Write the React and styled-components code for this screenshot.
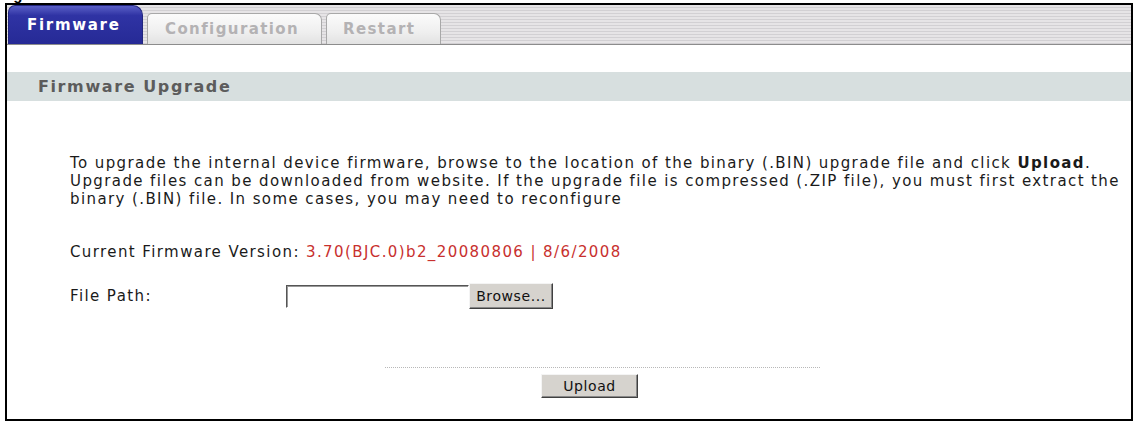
import React from 'react';
import styled, { createGlobalStyle } from 'styled-components';

const GlobalStyle = createGlobalStyle`
  body {
    margin: 0;
    background: #fff;
    font-family: "DejaVu Sans", Verdana, sans-serif;
  }
`;

const Caption = styled.div`
  height: 3px;
  overflow: hidden;
  font: bold 15px/15px "Liberation Sans", Arial, sans-serif;
  color: #000;

  span {
    display: block;
    margin-top: -13px;
  }
`;

const Frame = styled.div`
  margin-left: 5px;
  width: 1124px;
  height: 414px;
  border: 2px solid #000;
  display: flex;
  flex-direction: column;
`;

const TabBar = styled.div`
  display: flex;
  align-items: flex-end;
  height: 39px;
  padding-left: 1px;
  border-bottom: 1px solid #8c8c8c;
  background: repeating-linear-gradient(
    to bottom,
    #e6e4e6 0px,
    #e6e4e6 2px,
    #d2d0d3 2px,
    #d2d0d3 3px
  );
`;

const Tab = styled.div`
  box-sizing: border-box;
  width: ${p => p.$w}px;
  margin-right: 4px;
  height: ${p => (p.$active ? 39 : 31)}px;
  padding-left: ${p => p.$pad}px;
  display: flex;
  align-items: center;
  font-weight: bold;
  font-size: 15px;
  letter-spacing: ${p => (p.$active ? 1.7 : 1.4)}px;
  border-radius: ${p => (p.$active ? '7px 10px 0 0' : '5px 7px 0 0')};
  color: ${p => (p.$active ? '#fff' : '#b4b2b4')};
  background: ${p =>
    p.$active
      ? 'linear-gradient(to bottom, #5a5fc6 0%, #2f33a4 25%, #262a96 100%)'
      : 'linear-gradient(to bottom, #fbfbfb 0%, #efefef 60%, #e2e2e2 100%)'};
  border: 1px solid ${p => (p.$active ? '#22267e' : '#a8a8a8')};
  border-bottom: none;
`;

const TitleBar = styled.div`
  margin-top: 27px;
  height: 29px;
  background: #d7dfdf;
  display: flex;
  align-items: center;
  padding-left: 31px;
  font-weight: bold;
  font-size: 16px;
  letter-spacing: 1.6px;
  color: #5c5c5c;
`;

const Body = styled.div`
  padding: 53px 0 0 63px;
  font-size: 15px;
  letter-spacing: 1.4px;
  line-height: 18px;
  color: #1a1a1a;
`;

const Para = styled.p`
  margin: 0 0 ${p => p.$gap || 0}px;
  white-space: nowrap;
`;

const Red = styled.span`
  color: #c8302e;
`;

const FormRow = styled.div`
  display: flex;
  align-items: center;
  height: 26px;
`;

const Label = styled.div`
  width: 216px;
`;

const TextInput = styled.input`
  box-sizing: border-box;
  width: 183px;
  height: 23px;
  border: 1px solid #fff;
  border-top-color: #555;
  border-left-color: #555;
  box-shadow: inset 1px 1px 0 #999;
  outline: none;
  background: #fff;
`;

const Button = styled.button`
  box-sizing: border-box;
  height: ${p => p.$h}px;
  width: ${p => p.$w}px;
  padding: 0;
  font-family: "DejaVu Sans", Verdana, sans-serif;
  font-size: 14px;
  letter-spacing: 0.6px;
  color: #111;
  background: #d6d3ce;
  border: 1px solid;
  border-color: #f4f4f4 #404040 #404040 #f4f4f4;
  box-shadow: inset -1px -1px 0 #888;
`;

const Footer = styled.div`
  margin-top: auto;
  margin-bottom: 21px;
  display: flex;
  flex-direction: column;
`;

const Dots = styled.div`
  margin-left: 378px;
  width: 435px;
  border-top: 1px dotted #b8b8b8;
  margin-bottom: 6px;
`;

const UploadWrap = styled.div`
  padding-left: 534px;
`;

export default function App() {
  return (
    <>
      <GlobalStyle />
      <Caption><span>Figure</span></Caption>
      <Frame>
        <TabBar>
          <Tab $active $w={135} $pad={18}>Firmware</Tab>
          <Tab $w={175} $pad={17}>Configuration</Tab>
          <Tab $w={115} $pad={16}>Restart</Tab>
        </TabBar>
        <TitleBar>Firmware Upgrade</TitleBar>
        <Body>
          <Para $gap={35}>
            To upgrade the internal device firmware, browse to the location of the binary (.BIN) upgrade file and click <b>Upload</b>.<br />
            Upgrade files can be downloaded from website. If the upgrade file is compressed (.ZIP file), you must first extract the<br />
            binary (.BIN) file. In some cases, you may need to reconfigure
          </Para>
          <Para $gap={22}>
            Current Firmware Version: <Red>3.70(BJC.0)b2_20080806 | 8/6/2008</Red>
          </Para>
          <FormRow>
            <Label>File Path:</Label>
            <TextInput type="text" />
            <Button $w={84} $h={26}>Browse...</Button>
          </FormRow>
        </Body>
        <Footer>
          <Dots />
          <UploadWrap>
            <Button $w={97} $h={24}>Upload</Button>
          </UploadWrap>
        </Footer>
      </Frame>
    </>
  );
}
